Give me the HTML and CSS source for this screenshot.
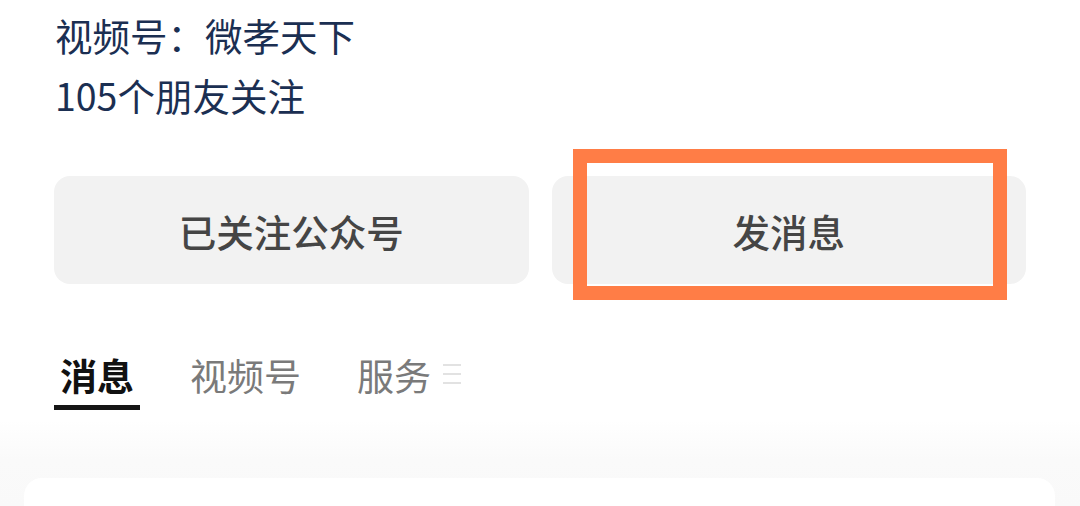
FILE: index.html
```html
<!DOCTYPE html>
<html lang="zh-CN">
<head>
<meta charset="utf-8">
<link rel="stylesheet" href="styles.css">
</head>
<body>
<div class="page">
  <div class="profile">
    <div class="line">视频号：微孝天下</div>
    <div class="line">105个朋友关注</div>
  </div>
  <div class="actions">
    <div class="btn">已关注公众号</div>
    <div class="btn btn-msg">发消息<span class="highlight"></span></div>
  </div>
  <div class="tabs">
    <div class="tab active">消息</div>
    <div class="tab">视频号</div>
    <div class="tab">服务</div>
    <div class="menu-icon"><span></span><span></span><span></span></div>
  </div>
  <div class="feed">
    <div class="card"></div>
  </div>
</div>
</body>
</html>
```

FILE: styles.css
```css
html, body {
  margin: 0;
  padding: 0;
  background: #ffffff;
}
body {
  width: 1080px;
  height: 506px;
  overflow: hidden;
  font-family: "Noto Sans CJK SC", "Noto Sans", sans-serif;
}
.page {
  display: flex;
  flex-direction: column;
  height: 506px;
}
.profile {
  padding: 5px 0 0 55px;
  color: #1b2f52;
  font-size: 37.5px;
}
.line {
  height: 60px;
  line-height: 60px;
}
.actions {
  display: flex;
  gap: 23px;
  padding: 0 54px;
  margin-top: 51px;
}
.btn {
  flex: 1;
  height: 108px;
  background: #f2f2f2;
  border-radius: 16px;
  display: flex;
  align-items: center;
  justify-content: center;
  font-size: 37.5px;
  font-weight: 500;
  color: #454545;
}
.btn-msg {
  position: relative;
}
.highlight {
  position: absolute;
  left: 21px;
  top: -27px;
  width: 406px;
  height: 123px;
  border: 14px solid #ff7d46;
}
.tabs {
  display: flex;
  align-items: flex-start;
  gap: 44px;
  padding-left: 54px;
  margin-top: 61px;
}
.tab {
  padding: 0 6px;
  height: 60px;
  line-height: 60px;
  font-size: 37px;
  color: #7a7a7a;
  border-bottom: 5px solid transparent;
}
.tab.active {
  color: #111111;
  font-weight: 700;
  border-bottom-color: #151515;
}
.menu-icon {
  margin-left: -38px;
  margin-top: 19px;
  width: 18px;
  height: 20px;
  display: flex;
  flex-direction: column;
  justify-content: space-between;
}
.menu-icon span {
  display: block;
  height: 2px;
  background: #e2e2e2;
}
.feed {
  margin-top: 10px;
  flex: 1;
  min-height: 0;
  display: flex;
  flex-direction: column;
  background: linear-gradient(#ffffff 0px, #fafafa 40px, #f9f9f9 100%);
  padding: 58px 25px 0 24px;
}
.card {
  flex: 1;
  background: #ffffff;
  border-radius: 18px 18px 0 0;
}
```
